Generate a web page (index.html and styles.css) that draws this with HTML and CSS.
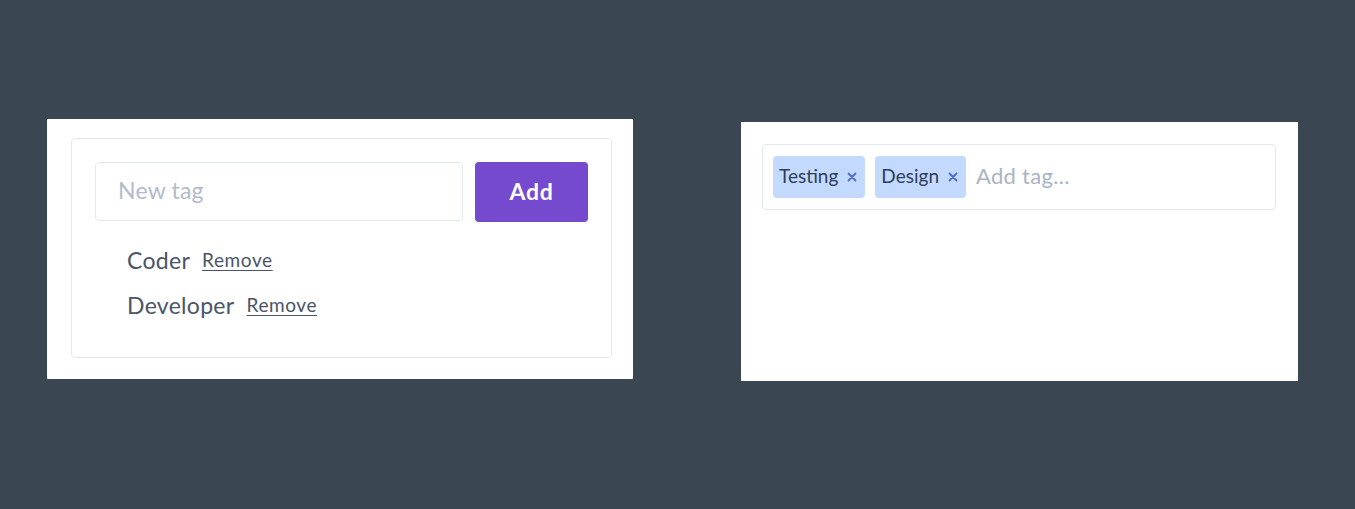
FILE: index.html
```html
<!DOCTYPE html>
<html lang="en">
<head>
<meta charset="utf-8">
<title>Tags</title>
<link rel="stylesheet" href="styles.css">
</head>
<body>
<main class="stage">
  <section class="panel panel-left">
    <div class="card">
      <form class="add-row" onsubmit="return false">
        <input class="tag-input" type="text" placeholder="New tag">
        <button class="add-btn" type="submit">Add</button>
      </form>
      <ul class="tag-list">
        <li class="tag-item"><span class="tag-name">Coder</span><a class="remove" href="#">Remove</a></li>
        <li class="tag-item"><span class="tag-name">Developer</span><a class="remove" href="#">Remove</a></li>
      </ul>
    </div>
  </section>
  <section class="panel panel-right">
    <div class="chip-box">
      <span class="chip">Testing<button class="chip-x" type="button" aria-label="Remove Testing"><svg viewBox="0 0 10 10" width="10" height="10"><path d="M1.5 1.5 8.5 8.5M8.5 1.5 1.5 8.5"/></svg></button></span>
      <span class="chip">Design<button class="chip-x" type="button" aria-label="Remove Design"><svg viewBox="0 0 10 10" width="10" height="10"><path d="M1.5 1.5 8.5 8.5M8.5 1.5 1.5 8.5"/></svg></button></span>
      <input class="chip-input" type="text" placeholder="Add tag...">
    </div>
  </section>
</main>
</body>
</html>
```

FILE: styles.css
```css
* { box-sizing: border-box; }

html, body {
  margin: 0;
  height: 100%;
}

body {
  background: #3a4752;
  font-family: Lato, "Open Sans", "Liberation Sans", sans-serif;
  color: #4a5568;
}

.stage {
  display: flex;
  align-items: flex-start;
  gap: 108px;
  padding: 119px 0 0 47px;
}

.panel {
  background: #ffffff;
  height: 260px;
}

.panel-left {
  width: 586px;
  padding: 19px 21px 21px 24px;
}

.panel-right {
  width: 557px;
  margin-top: 3px;
  height: 259px;
  padding: 22px 22px 22px 21px;
}

.card {
  border: 1px solid #e2e8f0;
  border-radius: 4px;
  height: 220px;
  padding: 23px 23px 0 23px;
}

.add-row {
  display: flex;
  gap: 12px;
  margin: 0;
}

.tag-input {
  flex: 1;
  height: 59px;
  border: 1px solid #e2e8f0;
  border-radius: 4px;
  padding: 0 22px 3px;
  font-family: inherit;
  font-size: 23px;
  letter-spacing: 0.2px;
  color: #4a5568;
  outline: none;
}

.tag-input::placeholder { color: #b2bacb; }

.add-btn {
  width: 113px;
  height: 60px;
  border: 0;
  border-radius: 4px;
  padding: 0 0 3px;
  background: #764ace;
  color: #ffffff;
  font-family: inherit;
  font-weight: 700;
  font-size: 23px;
  letter-spacing: 0.8px;
}

.tag-list {
  list-style: none;
  margin: 15px 0 0;
  padding: 0 0 0 32px;
}

.tag-item {
  height: 45px;
  display: flex;
  align-items: center;
  gap: 12px;
}

.tag-name {
  font-size: 23px;
  letter-spacing: 0.3px;
  color: #4a5568;
}

.remove {
  font-size: 19px;
  letter-spacing: 0.6px;
  color: #4a5568;
  text-decoration: underline;
  text-underline-offset: 3px;
}

.chip-box {
  border: 1px solid #e2e8f0;
  border-radius: 4px;
  padding: 11px 10px;
  display: flex;
  align-items: center;
  gap: 10px;
}

.chip {
  height: 42px;
  display: inline-flex;
  align-items: center;
  gap: 9px;
  padding: 0 8px 3px 6px;
  background: #c3dafe;
  border-radius: 4px;
  font-size: 19px;
  color: #2f3d5c;
}

.chip-x {
  border: 0;
  background: none;
  padding: 3px 0 0;
  display: inline-flex;
  color: #4c6bd0;
  cursor: pointer;
}

.chip-x svg {
  stroke: currentColor;
  stroke-width: 1.8;
  stroke-linecap: round;
  fill: none;
}

.chip-input {
  flex: 1;
  border: 0;
  outline: none;
  padding: 0 0 3px;
  font-family: inherit;
  font-size: 22px;
  letter-spacing: 0.3px;
  color: #4a5568;
  background: transparent;
}

.chip-input::placeholder { color: #a9b3c6; }
```
